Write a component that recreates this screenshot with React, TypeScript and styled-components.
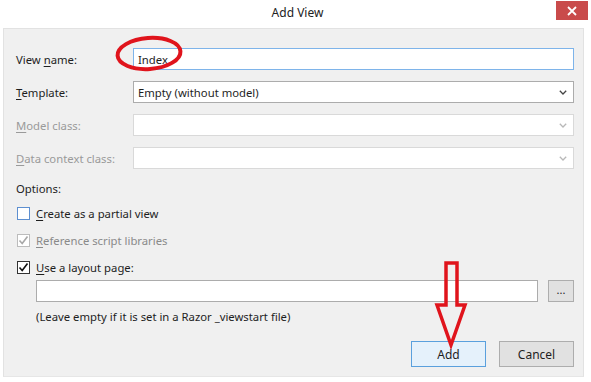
import React from 'react';
import styled, { createGlobalStyle } from 'styled-components';

const GlobalStyle = createGlobalStyle`
  html, body {
    margin: 0;
    padding: 0;
    background: #ffffff;
  }
  body {
    font-family: "Noto Sans", "Open Sans", "Liberation Sans", sans-serif;
    font-size: 11.3px;
    color: #1e1e1e;
  }
`;

const Window = styled.div`
  position: relative;
  width: 591px;
  height: 382px;
  background: #ffffff;
  overflow: hidden;
`;

const TitleBar = styled.div`
  position: relative;
  height: 28px;
  display: flex;
  align-items: center;
  justify-content: center;
`;

const Title = styled.div`
  font-size: 12px;
  color: #222;
  margin-top: -3px;
  margin-left: 4px;
`;

const CloseButton = styled.div`
  position: absolute;
  right: 3px;
  top: 1px;
  width: 32px;
  height: 19px;
  background: #c94b4b;
  display: flex;
  align-items: center;
  justify-content: center;
`;

const Body = styled.div`
  margin-left: 3px;
  width: 581px;
  height: 349px;
  box-sizing: border-box;
  background: #f0f0f0;
  border: 1px solid #e2e2e2;
  border-bottom-color: #e6e6e6;
  padding: 19px 9px 0 12px;
  display: flex;
  flex-direction: column;
`;

const FieldRow = styled.div`
  display: flex;
  align-items: center;
  height: 22px;
  margin-bottom: 11px;
`;

const Label = styled.div<{ $disabled?: boolean }>`
  width: 117px;
  flex-shrink: 0;
  color: ${({ $disabled }) => ($disabled ? '#9a9a9a' : '#1e1e1e')};
`;

const Key = styled.span`
  text-decoration: underline;
  text-underline-offset: 2px;
`;

const TextInput = styled.div<{ $focused?: boolean }>`
  flex: 1;
  height: 22px;
  box-sizing: border-box;
  background: #ffffff;
  border: 1px solid ${({ $focused }) => ($focused ? '#7eb4ea' : '#acacac')};
  display: flex;
  align-items: center;
  padding-left: 4px;
  color: #1e1e1e;
`;

const Select = styled.div<{ $disabled?: boolean }>`
  flex: 1;
  height: 22px;
  box-sizing: border-box;
  background: #ffffff;
  border: 1px solid ${({ $disabled }) => ($disabled ? '#d9d9d9' : '#acacac')};
  display: flex;
  align-items: center;
  justify-content: space-between;
  padding: 0 6px 0 4px;
`;

const Section = styled.div`
  height: 16px;
  display: flex;
  align-items: center;
`;

const CheckRow = styled.div<{ $disabled?: boolean; $first?: boolean }>`
  display: flex;
  align-items: center;
  height: 16px;
  margin-top: ${({ $first }) => ($first ? '9px' : '11px')};
  gap: 6px;
  color: ${({ $disabled }) => ($disabled ? '#8a8a8a' : '#1e1e1e')};
`;

const Box = styled.div<{ $tone: 'blue' | 'gray' | 'dark' }>`
  width: 13px;
  height: 13px;
  box-sizing: border-box;
  margin-left: 1px;
  background: #ffffff;
  border: 1px solid
    ${({ $tone }) => ($tone === 'blue' ? '#5d8fd0' : $tone === 'gray' ? '#bcbcbc' : '#333333')};
  display: flex;
  align-items: center;
  justify-content: center;
`;

const LayoutRow = styled.div`
  display: flex;
  align-items: center;
  margin-top: 5px;
  margin-left: 20px;
  gap: 10px;
`;

const LayoutInput = styled.div`
  width: 503px;
  height: 22px;
  box-sizing: border-box;
  background: #ffffff;
  border: 1px solid #acacac;
`;

const BrowseButton = styled.div`
  width: 26px;
  height: 22px;
  box-sizing: border-box;
  background: #e1e1e1;
  border: 1px solid #adadad;
  display: flex;
  align-items: center;
  justify-content: center;
  font-size: 11px;
  line-height: 1;
  padding-bottom: 3px;
`;

const Hint = styled.div`
  margin-left: 20px;
  margin-top: 6px;
  height: 16px;
  display: flex;
  align-items: center;
`;

const Footer = styled.div`
  display: flex;
  justify-content: flex-end;
  gap: 13px;
  margin-top: 17px;
`;

const Button = styled.div<{ $primary?: boolean }>`
  width: 75px;
  height: 26px;
  box-sizing: border-box;
  background: ${({ $primary }) => ($primary ? '#e5f1fb' : '#e1e1e1')};
  border: 1px solid ${({ $primary }) => ($primary ? '#5aa0dd' : '#adadad')};
  display: flex;
  align-items: center;
  justify-content: center;
  color: #1e1e1e;
  font-size: 12px;
`;

const Overlay = styled.svg`
  position: absolute;
  left: 0;
  top: 0;
  pointer-events: none;
`;

const Chevron: React.FC<{ color: string }> = ({ color }) => (
  <svg width="8" height="5" viewBox="0 0 8 5">
    <path d="M0.8 0.8 L4 4 L7.2 0.8" fill="none" stroke={color} strokeWidth="1.3" />
  </svg>
);

const Tick: React.FC<{ color: string }> = ({ color }) => (
  <svg width="11" height="11" viewBox="0 0 11 11">
    <path d="M1.5 5.5 L4.2 8.5 L9.5 1.5" fill="none" stroke={color} strokeWidth="1.6" />
  </svg>
);

const App: React.FC = () => {
  return (
    <Window>
      <GlobalStyle />
      <TitleBar>
        <Title>Add View</Title>
        <CloseButton>
          <svg width="10" height="10" viewBox="0 0 10 10">
            <path d="M1 1 L9 9 M9 1 L1 9" stroke="#ffffff" strokeWidth="1.8" />
          </svg>
        </CloseButton>
      </TitleBar>

      <Body>
        <FieldRow>
          <Label>
            View <Key>n</Key>ame:
          </Label>
          <TextInput $focused>Index</TextInput>
        </FieldRow>
        <FieldRow>
          <Label>
            <Key>T</Key>emplate:
          </Label>
          <Select>
            <span>Empty (without model)</span>
            <Chevron color="#444" />
          </Select>
        </FieldRow>
        <FieldRow>
          <Label $disabled>
            <Key>M</Key>odel class:
          </Label>
          <Select $disabled>
            <span />
            <Chevron color="#b8b8b8" />
          </Select>
        </FieldRow>
        <FieldRow>
          <Label $disabled>
            <Key>D</Key>ata context class:
          </Label>
          <Select $disabled>
            <span />
            <Chevron color="#b8b8b8" />
          </Select>
        </FieldRow>

        <Section>Options:</Section>

        <CheckRow $first>
          <Box $tone="blue" />
          <span>
            <Key>C</Key>reate as a partial view
          </span>
        </CheckRow>
        <CheckRow $disabled>
          <Box $tone="gray">
            <Tick color="#a8a8a8" />
          </Box>
          <span>
            <Key>R</Key>eference script libraries
          </span>
        </CheckRow>
        <CheckRow>
          <Box $tone="dark">
            <Tick color="#111" />
          </Box>
          <span>
            <Key>U</Key>se a layout page:
          </span>
        </CheckRow>

        <LayoutRow>
          <LayoutInput />
          <BrowseButton>...</BrowseButton>
        </LayoutRow>
        <Hint>(Leave empty if it is set in a Razor _viewstart file)</Hint>

        <Footer>
          <Button $primary>Add</Button>
          <Button>Cancel</Button>
        </Footer>
      </Body>

      <Overlay width="591" height="382" viewBox="0 0 591 382">
        <ellipse
          cx="149"
          cy="53.5"
          rx="31.5"
          ry="15.5"
          fill="none"
          stroke="#e0141c"
          strokeWidth="4"
          transform="rotate(-4 149 53.5)"
        />
        <path
          d="M446 263 L457 263 L457 305 L465 305 L451 345 L437 305 L446 305 Z"
          fill="none"
          stroke="#e0141c"
          strokeWidth="3.5"
          strokeLinejoin="miter"
        />
      </Overlay>
    </Window>
  );
};

export default App;
